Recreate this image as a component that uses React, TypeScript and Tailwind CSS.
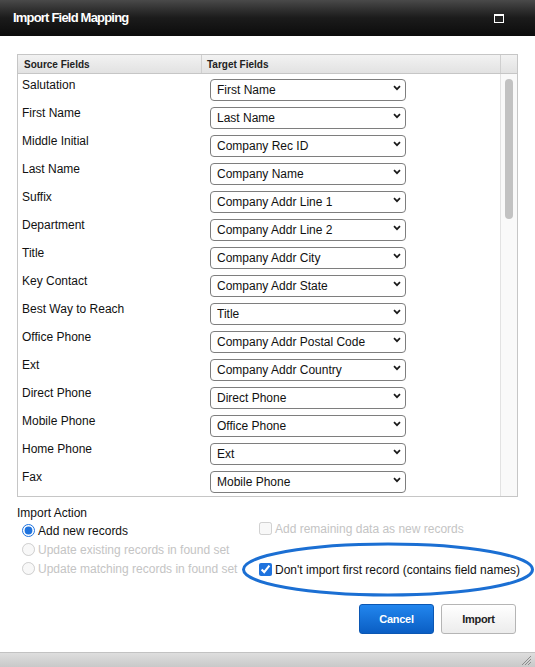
import { useState } from "react";

const sourceFields = [
  "Salutation",
  "First Name",
  "Middle Initial",
  "Last Name",
  "Suffix",
  "Department",
  "Title",
  "Key Contact",
  "Best Way to Reach",
  "Office Phone",
  "Ext",
  "Direct Phone",
  "Mobile Phone",
  "Home Phone",
  "Fax",
];

const targetFields = [
  "First Name",
  "Last Name",
  "Company Rec ID",
  "Company Name",
  "Company Addr Line 1",
  "Company Addr Line 2",
  "Company Addr City",
  "Company Addr State",
  "Title",
  "Company Addr Postal Code",
  "Company Addr Country",
  "Direct Phone",
  "Office Phone",
  "Ext",
  "Mobile Phone",
];

const FieldSelect = ({ value }: { value: string }) => (
  <div className="relative w-[196px] h-[22px]">
    <select
      defaultValue={value}
      className="appearance-none w-full h-full rounded-[4px] border border-[#7e7e7e] bg-white pl-[6px] text-[12px] leading-[14px] text-[#111] outline-none"
    >
      {targetFields.map((f) => (
        <option key={f}>{f}</option>
      ))}
    </select>
    <svg
      className="absolute right-[5px] top-[8px] pointer-events-none"
      width="8"
      height="6"
      viewBox="0 0 8 6"
    >
      <path d="M1 1.2 L4 4.2 L7 1.2" fill="none" stroke="#1a1a1a" strokeWidth="1.7" />
    </svg>
  </div>
);

export default function App() {
  const [skipFirst, setSkipFirst] = useState(true);

  return (
    <div className="relative w-[535px] h-[667px] flex flex-col bg-white font-['Liberation_Sans',Arial,sans-serif] text-[#111]">
      {/* title bar */}
      <div className="h-[36px] shrink-0 flex items-center justify-between pl-[13px] pr-[31px] bg-linear-to-b from-[#4a4a4a] via-[#1b1b1b] to-[#0c0c0c]">
        <span className="text-white font-bold text-[13px] tracking-[-0.8px]">
          Import Field Mapping
        </span>
        <div className="w-[10px] h-[9px] border border-white border-t-[2px] bg-[#222]" />
      </div>

      {/* mapping table */}
      <div className="pl-[17px] pt-[18px]">
        <div className="w-[501px] h-[443px] flex flex-col border border-[#c6c6c6] overflow-hidden">
          <div className="h-[19px] shrink-0 flex border-b border-[#c6c6c6] bg-linear-to-b from-[#f2f2f2] to-[#e2e2e2] text-[10px] font-bold text-[#222]">
            <div className="w-[184px] border-r border-[#cfcfcf] pl-[6px] flex items-center">
              Source Fields
            </div>
            <div className="flex-1 border-r border-[#cfcfcf] pl-[5px] flex items-center">
              Target Fields
            </div>
            <div className="w-[16px]" />
          </div>
          <div className="flex-1 flex min-h-0">
            <div className="flex-1 flex flex-col">
              {sourceFields.map((s, i) => (
                <div key={s} className="h-[28px] shrink-0 flex">
                  <div className="w-[184px] pl-[4px] pt-[4px] text-[12px] leading-[14px]">
                    {s}
                  </div>
                  <div className="pl-[8px] pt-[3px]">
                    <FieldSelect value={targetFields[i]} />
                  </div>
                </div>
              ))}
            </div>
            <div className="w-[17px] border-l border-[#e2e2e2] bg-[#f9f9f9] pt-[5px] pl-[4px]">
              <div className="w-[8px] h-[140px] rounded-full bg-[#c2c2c2]" />
            </div>
          </div>
        </div>
      </div>

      {/* import action */}
      <div className="flex pl-[17px] pt-[7px] text-[12px] leading-[14px]">
        <div className="w-[242px] flex flex-col">
          <div className="h-[17px] flex items-center">Import Action</div>
          <label className="h-[19px] flex items-center gap-[3px] pl-[5px]">
            <input type="radio" name="action" defaultChecked className="m-0 w-[13px] h-[13px] accent-[#1f73de]" />
            <span>Add new records</span>
          </label>
          <label className="h-[19px] flex items-center gap-[3px] pl-[5px] text-[#c4c4c4]">
            <input type="radio" name="action" disabled className="m-0 w-[13px] h-[13px]" />
            <span>Update existing records in found set</span>
          </label>
          <label className="h-[19px] flex items-center gap-[3px] pl-[5px] text-[#c4c4c4]">
            <input type="radio" name="action" disabled className="m-0 w-[13px] h-[13px]" />
            <span>Update matching records in found set</span>
          </label>
        </div>
        <div className="flex flex-col pt-[15px]">
          <label className="h-[19px] flex items-center gap-[3px] text-[#c4c4c4]">
            <input type="checkbox" disabled className="m-0 w-[13px] h-[13px]" />
            <span>Add remaining data as new records</span>
          </label>
          <div className="h-[22px]" />
          <label className="h-[19px] flex items-center gap-[3px]">
            <input
              type="checkbox"
              checked={skipFirst}
              onChange={() => setSkipFirst(!skipFirst)}
              className="m-0 w-[13px] h-[13px] accent-[#1f73de]"
            />
            <span>Don't import first record (contains field names)</span>
          </label>
        </div>
      </div>

      {/* buttons */}
      <div className="flex justify-end gap-[7px] pr-[19px] pt-[25px]">
        <button className="w-[75px] h-[30px] rounded-[3px] border border-[#0b57b3] bg-linear-to-b from-[#2286ee] to-[#0a5ec4] text-white text-[11px] font-bold tracking-[-0.3px]">
          Cancel
        </button>
        <button className="w-[75px] h-[30px] rounded-[3px] border border-[#b5b5b5] bg-linear-to-b from-[#ffffff] to-[#ececec] text-[#222] text-[11px] font-bold tracking-[-0.3px]">
          Import
        </button>
      </div>

      {/* footer */}
      <div className="mt-auto h-[15px] border-t border-[#c2c2c2] bg-linear-to-b from-[#dedede] to-[#c9c9c9] flex justify-end items-end pr-[3px] pb-[1px]">
        <svg width="11" height="11" viewBox="0 0 11 11">
          <path d="M1 10 L10 1 M4 10 L10 4 M7 10 L10 7" stroke="#8c8c8c" strokeWidth="1" />
        </svg>
      </div>

      {/* annotation */}
      <svg
        className="absolute left-[242px] top-[542px] pointer-events-none"
        width="293"
        height="55"
        viewBox="0 0 293 55"
      >
        <ellipse cx="146" cy="27.5" rx="144.5" ry="25.5" fill="none" stroke="#1b6fd3" strokeWidth="3" />
      </svg>
    </div>
  );
}
